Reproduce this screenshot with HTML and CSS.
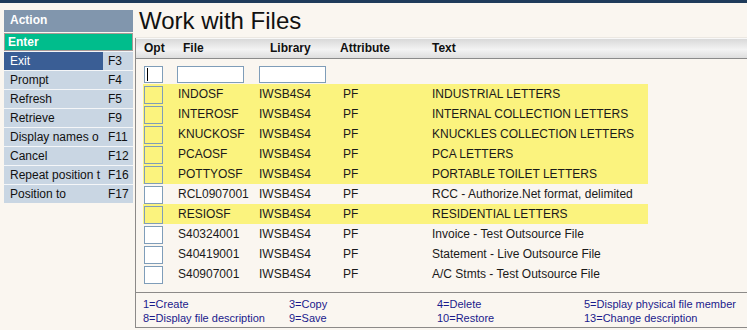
FILE: index.html
```html
<!DOCTYPE html>
<html>
<head>
<meta charset="utf-8">
<link rel="stylesheet" href="styles.css">
</head>
<body>
<div class="app">
  <div class="sidebar">
    <div class="side-head">Action</div>
    <div class="side-enter">Enter</div>
    <div class="side-item selected"><span class="lbl">Exit</span><span class="key">F3</span></div>
    <div class="side-item"><span class="lbl">Prompt</span><span class="key">F4</span></div>
    <div class="side-item"><span class="lbl">Refresh</span><span class="key">F5</span></div>
    <div class="side-item"><span class="lbl">Retrieve</span><span class="key">F9</span></div>
    <div class="side-item"><span class="lbl">Display names o</span><span class="key">F11</span></div>
    <div class="side-item"><span class="lbl">Cancel</span><span class="key">F12</span></div>
    <div class="side-item"><span class="lbl">Repeat position t</span><span class="key">F16</span></div>
    <div class="side-item"><span class="lbl">Position to</span><span class="key">F17</span></div>
  </div>
  <div class="main">
    <div class="title">Work with Files</div>
    <div class="panel">
      <div class="thead">
        <span>Opt</span><span>File</span><span>Library</span><span>Attribute</span><span>Text</span>
      </div>
      <div class="inputs">
        <span class="box opt-in"><span class="caret"></span></span>
        <span class="box file-in"></span>
        <span class="box lib-in"></span>
      </div>
      <div class="rows">
        <div class="row hl"><span class="box"></span><span>INDOSF</span><span>IWSB4S4</span><span>PF</span><span>INDUSTRIAL LETTERS</span></div>
        <div class="row hl"><span class="box"></span><span>INTEROSF</span><span>IWSB4S4</span><span>PF</span><span>INTERNAL COLLECTION LETTERS</span></div>
        <div class="row hl"><span class="box"></span><span>KNUCKOSF</span><span>IWSB4S4</span><span>PF</span><span>KNUCKLES COLLECTION LETTERS</span></div>
        <div class="row hl"><span class="box"></span><span>PCAOSF</span><span>IWSB4S4</span><span>PF</span><span>PCA LETTERS</span></div>
        <div class="row hl"><span class="box"></span><span>POTTYOSF</span><span>IWSB4S4</span><span>PF</span><span>PORTABLE TOILET LETTERS</span></div>
        <div class="row"><span class="box"></span><span>RCL0907001</span><span>IWSB4S4</span><span>PF</span><span>RCC - Authorize.Net format, delimited</span></div>
        <div class="row hl"><span class="box"></span><span>RESIOSF</span><span>IWSB4S4</span><span>PF</span><span>RESIDENTIAL LETTERS</span></div>
        <div class="row"><span class="box"></span><span>S40324001</span><span>IWSB4S4</span><span>PF</span><span>Invoice - Test Outsource File</span></div>
        <div class="row"><span class="box"></span><span>S40419001</span><span>IWSB4S4</span><span>PF</span><span>Statement - Live Outsource File</span></div>
        <div class="row"><span class="box"></span><span>S40907001</span><span>IWSB4S4</span><span>PF</span><span>A/C Stmts - Test Outsource File</span></div>
      </div>
      <div class="footer">
        <span>1=Create</span><span>3=Copy</span><span>4=Delete</span><span>5=Display physical file member</span>
        <span>8=Display file description</span><span>9=Save</span><span>10=Restore</span><span>13=Change description</span>
      </div>
    </div>
  </div>
</div>
</body>
</html>
```

FILE: styles.css
```css
html, body {
  margin: 0;
  padding: 0;
}
body {
  background: #faf6f0;
  border-top: 3px solid #1f3b5b;
  font-family: "Liberation Sans", Arial, sans-serif;
  color: #1a1a1a;
  overflow: hidden;
  height: 327px;
}
.app {
  display: flex;
  align-items: flex-start;
}
.sidebar {
  width: 129px;
  margin: 7px 0 0 4px;
  flex: none;
  font-size: 12px;
}
.side-head {
  background: #8196ad;
  color: #fff;
  font-weight: bold;
  height: 22px;
  line-height: 20px;
  padding-left: 6px;
  margin-bottom: 1px;
}
.side-enter {
  background: #00bd8c;
  color: #fff;
  font-weight: bold;
  height: 16px;
  line-height: 16px;
  padding-left: 3px;
  border: 1px solid #a89a98;
}
.side-item {
  display: flex;
  height: 18px;
  line-height: 18px;
  background: #c9d6e3;
  border-top: 1px solid #f4f6f8;
  color: #111;
}
.side-item .lbl {
  width: 93px;
  padding-left: 6px;
  white-space: nowrap;
  overflow: hidden;
  flex: none;
}
.side-item .key {
  padding-left: 5px;
}
.side-item.selected .lbl {
  background: #3a5e95;
  color: #fff;
}
.main {
  flex: 1;
  margin-left: 2px;
  min-width: 0;
}
.title {
  height: 29px;
  padding: 5px 0 0 4px;
  font-size: 24px;
  line-height: 26px;
  color: #111;
  border-bottom: 1px solid #ece8e2;
}
.panel {
  border-left: 1px solid #8c8a88;
  border-bottom: 1px solid #8c8a88;
  height: 289px;
  display: flex;
  flex-direction: column;
}
.thead {
  display: grid;
  grid-template-columns: 39px 87px 70px 92px 1fr;
  padding-left: 8px;
  height: 19px;
  line-height: 19px;
  font-size: 12px;
  font-weight: bold;
  background: linear-gradient(#d9d9d9, #f3f3f3 55%, #dedede);
  border-top: 1px solid #f8f8f8;
  border-bottom: 1px solid #8a8a8a;
  color: #111;
}
.box {
  display: block;
  box-sizing: border-box;
  border: 1px solid #7f9db9;
  height: 18px;
}
.inputs {
  display: flex;
  margin: 7px 0 0 8px;
  height: 18px;
}
.inputs .box {
  background: #fff;
  height: 17px;
}
.opt-in {
  width: 19px;
}
.caret {
  display: block;
  width: 1px;
  height: 13px;
  background: #000;
  margin: 1px 0 0 2px;
}
.file-in {
  width: 67px;
  margin-left: 14px;
}
.lib-in {
  width: 67px;
  margin-left: 15px;
}
.rows {
  margin-left: 7px;
  width: 505px;
}
.row {
  display: grid;
  grid-template-columns: 35px 81px 84px 89px 1fr;
  height: 20px;
  line-height: 20px;
  font-size: 12px;
  color: #1a1a1a;
  white-space: nowrap;
}
.row .box {
  width: 19px;
  margin: 2px 0 0 1px;
  background: #fff;
}
.row.hl {
  background: #fbf37e;
}
.row.hl .box {
  background: transparent;
}
.footer {
  margin-top: auto;
  border-top: 1px solid #8c8a88;
  display: grid;
  grid-template-columns: 146px 148px 147px 1fr;
  padding: 4px 0 2px 7px;
  font-size: 11px;
  line-height: 14px;
  color: #1a1a8c;
  white-space: nowrap;
}
```
